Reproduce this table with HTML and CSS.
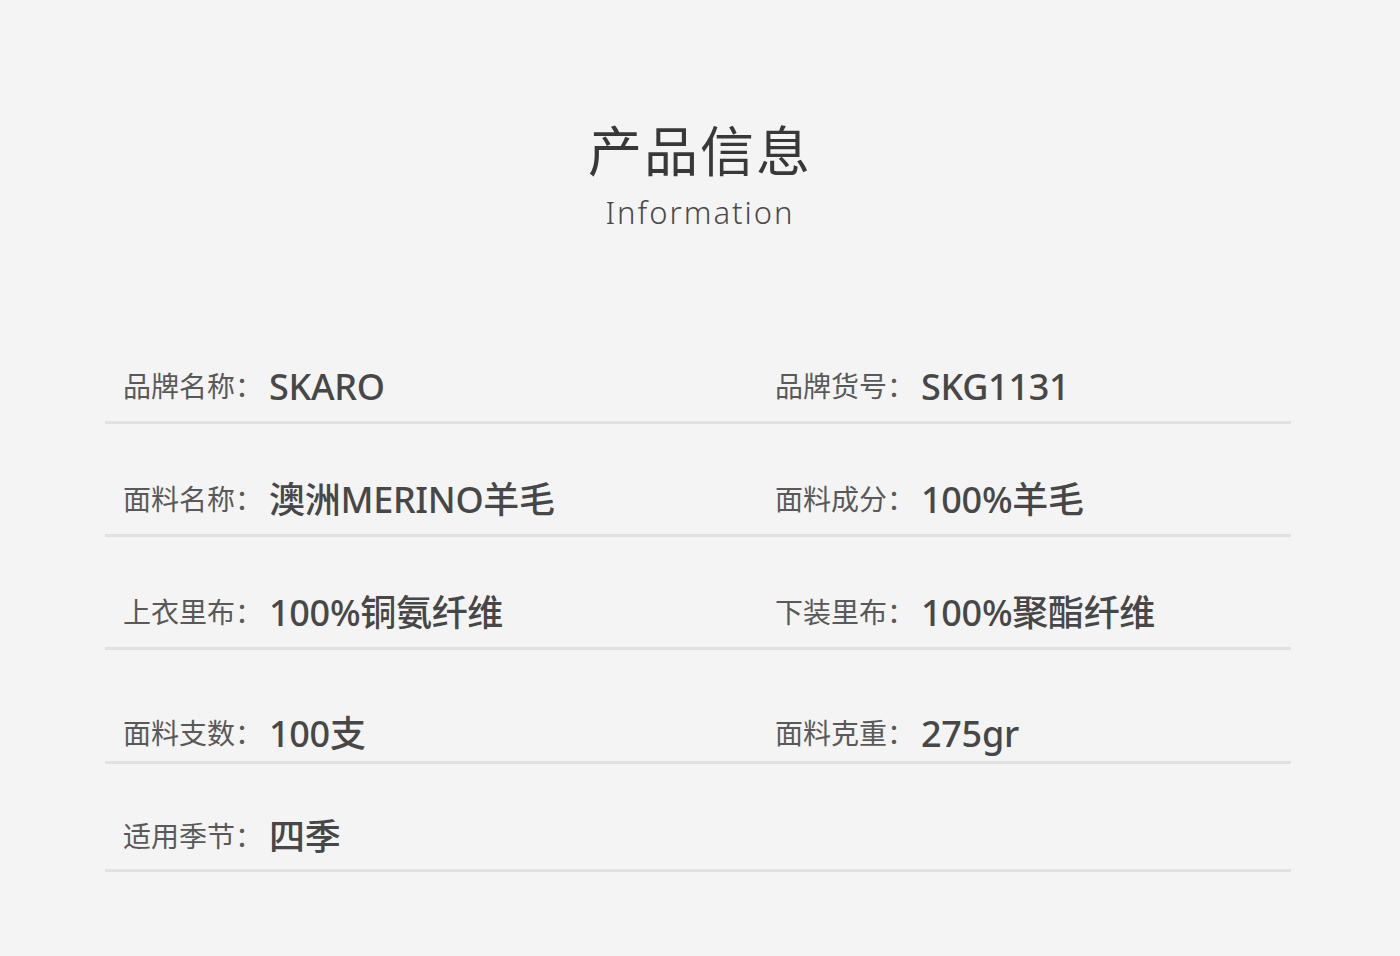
FILE: index.html
```html
<!DOCTYPE html>
<html lang="zh-CN">
<head>
<meta charset="utf-8">
<title>产品信息</title>
<link rel="stylesheet" href="styles.css">
</head>
<body>
<div class="page">
  <header class="head">
    <h1 class="title">产品信息</h1>
    <div class="subtitle">Information</div>
  </header>
  <div class="info">
    <div class="cell"><span class="label">品牌名称：</span><span class="value">SKARO</span></div>
    <div class="cell right"><span class="label">品牌货号：</span><span class="value">SKG1131</span></div>
    <div class="cell"><span class="label">面料名称：</span><span class="value">澳洲MERINO羊毛</span></div>
    <div class="cell right"><span class="label">面料成分：</span><span class="value">100%羊毛</span></div>
    <div class="cell"><span class="label">上衣里布：</span><span class="value">100%铜氨纤维</span></div>
    <div class="cell right"><span class="label">下装里布：</span><span class="value">100%聚酯纤维</span></div>
    <div class="cell row4"><span class="label">面料支数：</span><span class="value">100支</span></div>
    <div class="cell right row4"><span class="label">面料克重：</span><span class="value">275gr</span></div>
    <div class="cell last"><span class="label">适用季节：</span><span class="value">四季</span></div>
    <div class="cell right last"></div>
  </div>
</div>
</body>
</html>
```

FILE: styles.css
```css
html, body {
  margin: 0;
  padding: 0;
  background: #f4f4f4;
}

.page {
  height: 956px;
  overflow: hidden;
  font-family: "Noto Sans", "Noto Sans CJK SC", sans-serif;
}

.head {
  padding-top: 122px;
  display: flex;
  flex-direction: column;
  align-items: center;
}

.title {
  margin: 0;
  font-family: "Noto Sans CJK SC", sans-serif;
  font-weight: 400;
  font-size: 54px;
  line-height: 54px;
  letter-spacing: 2px;
  color: #383838;
}

.subtitle {
  margin-top: 20px;
  font-family: "Noto Sans", sans-serif;
  font-weight: 300;
  font-size: 31px;
  line-height: 32px;
  letter-spacing: 2px;
  color: #4a4a4a;
}

.info {
  width: 1186px;
  margin: 83px 0 0 105px;
  display: grid;
  grid-template-columns: 650px 1fr;
}

.cell {
  height: 113px;
  box-sizing: border-box;
  padding: 56px 0 0 18px;
  border-bottom: 3px solid #e1e1e1;
  white-space: nowrap;
  line-height: 36px;
}

.cell.right {
  padding-left: 20px;
}

.cell.row4 {
  height: 114px;
  padding-top: 64px;
}

.cell.last {
  height: 108px;
  padding-top: 53px;
}

.label {
  font-family: "Noto Sans CJK SC", sans-serif;
  font-size: 28px;
  color: #595959;
  margin-right: 6px;
  vertical-align: 3px;
}

.value {
  font-family: "Noto Sans", "Noto Sans CJK SC", sans-serif;
  font-weight: 500;
  font-size: 36px;
  letter-spacing: -0.3px;
  color: #474747;
}
```
